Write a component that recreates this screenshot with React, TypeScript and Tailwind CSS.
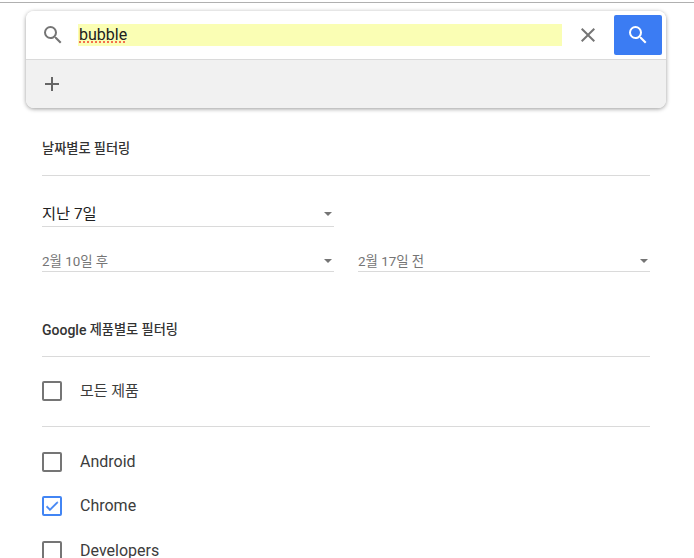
const FONT = "font-['Roboto','Noto_Sans_CJK_KR',sans-serif]";

function SearchIcon({ className }: { className: string }) {
  return (
    <svg viewBox="0 0 24 24" className={className} fill="currentColor">
      <path d="M15.5 14h-.79l-.28-.27A6.47 6.47 0 0 0 16 9.5 6.5 6.5 0 1 0 9.5 16c1.61 0 3.09-.59 4.23-1.57l.27.28v.79l5 4.99L20.49 19l-4.99-5zm-6 0C7.01 14 5 11.99 5 9.5S7.01 5 9.5 5 14 7.01 14 9.5 11.99 14 9.5 14z" />
    </svg>
  );
}

function Select({ label, small, className }: { label: string; small?: boolean; className: string }) {
  return (
    <div className={`flex items-center justify-between border-b border-[#dadada] ${className}`}>
      <span className={`pt-[2px] ${small ? "text-[13.4px] text-[#757575]" : "text-[15.3px] text-[#212121]"}`}>{label}</span>
      <span className="mr-[2px] h-0 w-0 border-x-[4px] border-t-[4px] border-x-transparent border-t-[#757575]" />
    </div>
  );
}

function Check({ label, checked, korean }: { label: string; checked?: boolean; korean?: boolean }) {
  return (
    <div className="flex h-[20px] items-center">
      <span
        className={`flex h-[20px] w-[20px] items-center justify-center rounded-[2px] border-2 ${
          checked ? "border-[#4285f4]" : "border-[#757575]"
        }`}
      >
        {checked && (
          <svg viewBox="0 0 24 24" className="h-[16px] w-[16px]" fill="#4285f4" stroke="#4285f4" strokeWidth="1">
            <path d="M9 16.17 4.83 12l-1.42 1.41L9 19 21 7l-1.41-1.41z" />
          </svg>
        )}
      </span>
      <span className={`ml-[18px] text-[#3c3c3c] ${korean ? "text-[15px]" : "text-[16px]"}`}>{label}</span>
    </div>
  );
}

export default function App() {
  return (
    <div className={`h-[558px] w-[694px] overflow-hidden bg-white ${FONT}`}>
      <div className="mt-[2px] h-[1px] bg-[#b0b0b0]" />
      <div className="mx-[26px] mt-[8px] w-[640px] overflow-hidden rounded-[8px] shadow-[0_1px_4px_rgba(0,0,0,0.4)]">
        <div className="flex h-[49px] items-center border-b border-[#dadada] bg-white pb-[1px]">
          <SearchIcon className="ml-[15px] h-[24px] w-[24px] text-[#757575]" />
          <div className="ml-[13px] flex h-[22px] w-[484px] items-center bg-[#fafeb4] pl-[1px] text-[16px] text-[#202020]">
            <span className="underline decoration-[#f4704c] decoration-dotted decoration-2 underline-offset-[2px]">bubble</span>
          </div>
          <svg viewBox="0 0 24 24" className="ml-[14px] h-[24px] w-[24px] text-[#757575]" fill="currentColor">
            <path d="M19 6.41 17.59 5 12 10.59 6.41 5 5 6.41 10.59 12 5 17.59 6.41 19 12 13.41 17.59 19 19 17.59 13.41 12z" />
          </svg>
          <div className="ml-[14px] flex h-[40px] w-[48px] items-center justify-center rounded-[2px] bg-[#3b7cf3]">
            <SearchIcon className="h-[24px] w-[24px] text-white" />
          </div>
        </div>
        <div className="flex h-[48px] items-center bg-[#f1f1f1] pl-[14px]">
          <svg viewBox="0 0 24 24" className="h-[24px] w-[24px] text-[#666666]" fill="currentColor">
            <path d="M19 13h-6v6h-2v-6H5v-2h6V5h2v6h6z" />
          </svg>
        </div>
      </div>

      <div className="mx-[42px] w-[608px]">
        <h2 className="mt-[32px] flex h-[18px] items-center text-[13.2px] font-medium text-[#333333]">날짜별로 필터링</h2>
        <div className="mt-[17px] border-b border-[#dadada]" />
        <Select label="지난 7일" className="mt-[25px] h-[26px] w-[292px]" />
        <div className="mt-[24px] flex gap-[24px]">
          <Select label="2월 10일 후" small className="h-[21px] flex-1" />
          <Select label="2월 17일 전" small className="h-[21px] flex-1" />
        </div>
        <h2 className="mt-[49px] flex h-[18px] items-center text-[13.2px] font-medium text-[#333333]">
          <span className="text-[14px]">Google</span>&nbsp;제품별로 필터링
        </h2>
        <div className="mt-[17px] border-b border-[#dadada]" />
        <div className="mt-[24px]">
          <Check label="모든 제품" korean />
        </div>
        <div className="mt-[25px] border-b border-[#dadada]" />
        <div className="mt-[25px] flex flex-col gap-[24px]">
          <Check label="Android" />
          <Check label="Chrome" checked />
          <div className="mt-[1px]">
            <Check label="Developers" />
          </div>
        </div>
      </div>
    </div>
  );
}
